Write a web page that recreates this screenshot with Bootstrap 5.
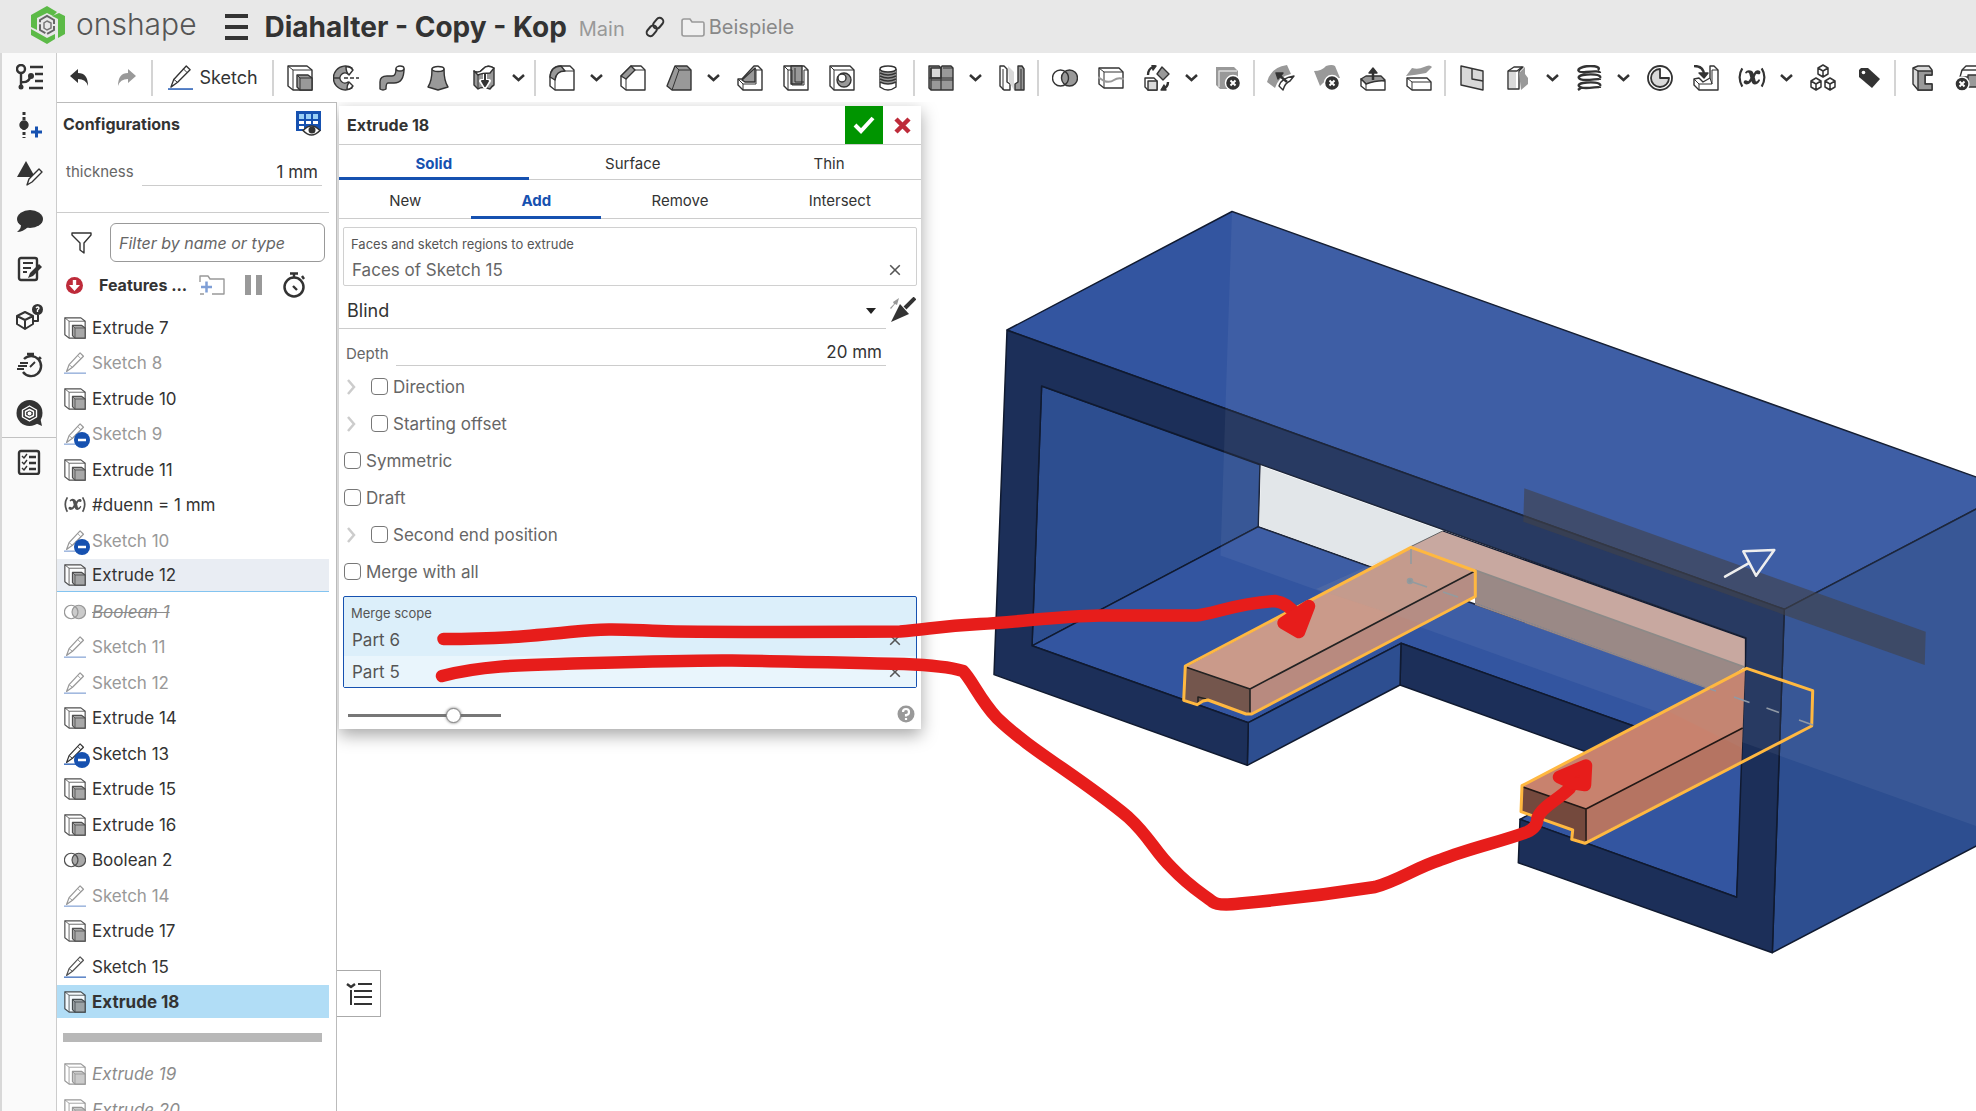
<!DOCTYPE html>
<html lang="en">
<head>
<meta charset="utf-8">
<meta name="viewport" content="width=device-width, initial-scale=1">
<title>Diahalter - Copy - Kop</title>
<link href="https://cdn.jsdelivr.net/npm/bootstrap@5.3.0/dist/css/bootstrap.min.css" rel="stylesheet">
<style>
:root{--ink:#333;--muted:#666;--rule:#ccc;--brand:#1651b0}
body{font-family:Inter,"Open Sans",sans-serif;font-size:17px;line-height:24px;color:var(--ink);background:#fff}
a{color:inherit;text-decoration:none}
button{color:inherit}
svg{display:block;flex:none}
.ico{fill:none;stroke:#333;stroke-width:1.4;stroke-linejoin:round}
svg .g{fill:#999}svg .lg{fill:#d9d9d9}svg .w{fill:#fff}svg .k{fill:#333}svg .n{stroke:none}svg .h{stroke-width:2.4}
.bare{border:0;background:none;padding:0;display:flex;align-items:center;justify-content:center}
.topbar{height:53px;background:#e8e8e8;padding-left:31px}
.mark-logo{margin-top:-4px}
.brandname{font-size:30px;font-weight:300;color:#555;margin:-6px 0 0 11px}
.doc-title{font-size:28px;font-weight:700;line-height:34px;margin:0 0 0 17px}
.crumb{font-size:20px;color:#888}
.crumb.branch{color:#999}
.rail{width:57px;background:#fafafa;border-left:2px solid #d8d8d8;border-right:1px solid var(--rule);padding-left:2px}
.rail .bare{height:48px;width:50px}
.rail hr{margin:0 0 0 -2px;border-color:#aaa;opacity:.7}
.tools{height:49px}
.tools .bare{width:46px;height:36px;flex:none}
.tools .more{width:25px;justify-content:flex-start;padding-left:5px}
.tools .sketch{width:114px;font-size:18px;gap:6px}
.vsep{width:2px;height:36px;background:#d4d4d4;margin:0 3px 0 2px;flex:none}
.side{width:280px;border-top:1px solid #bbb;border-right:1px solid #bbb;flex:none;overflow:hidden}
.side h2{font-size:16px;font-weight:700;line-height:24px;margin:0}
.conf{height:110px;width:272px;border-bottom:1px solid var(--rule)}
.conf-head{padding:8px 8px 0 6px}
.conf-row{margin-top:22px;padding:0 7px 0 9px}
.lbl{font-size:15px;color:#666;flex:none}
.lbl-conf{width:76px}
.lbl-depth{width:50px}
.lined{border:0;border-bottom:1px solid var(--rule);border-radius:0;text-align:right;background:none;width:0;height:28px;outline:0;color:#333}
.filter-row{width:284px;margin-top:10px;padding:0 16px 0 14px}
.filterbox{width:215px;height:39px;border:1px solid #999;border-radius:6px;padding:0 8px;font-size:16px;font-style:italic;color:#333}
.filterbox::placeholder{color:#666;opacity:1}
.feat-head{padding:10px 0 0 9px}
.feat-list{padding-top:13px}
.feat{height:33px;width:272px;padding-left:7px;gap:6px;margin-bottom:2px;white-space:nowrap}
.feat:nth-child(even){margin-bottom:3px}
.feat svg{opacity:.85;overflow:visible}
.off{color:#999}.off svg{opacity:.5}
.feat .pinned{opacity:1}
.hot{background:#e9edf3;border-bottom:1px solid #83c4f0}
.cur{background:#b1ddf6;font-weight:700}
.ghost{color:#8c8c8c;font-style:italic}.ghost svg{opacity:.5}
.struck{text-decoration:line-through}
.rollbar{width:259px;height:9px;background:#b8b8b8;margin:15px 0 15px 6px}
.stage,.marks{position:absolute;inset:0;width:100%;height:100%}
.marks{pointer-events:none;z-index:3}
.dlg{position:absolute;left:2px;top:4px;width:582px;background:#fff;box-shadow:0 6px 16px rgba(0,0,0,.35);z-index:2;color:#333}
.dlg-head{height:39px;border-bottom:1px solid var(--rule);padding-left:8px}
.dlg-head h1{font-size:16px;font-weight:700;line-height:24px;margin:0}
.ok{width:38px;height:38px;background:#009500}
.cancel{width:38px}
.tabrow{font-size:15px;border-bottom:1px solid var(--rule)}
.tabrow .bare{height:39px;border-bottom:3px solid transparent;margin-bottom:-1px;padding-top:6px}
.tabrow.first .bare{height:35px}
.tabrow .on{color:var(--brand);font-weight:700;border-color:var(--brand)}
.pick{border:1px solid #d0d0d0;border-radius:2px;margin:0 4px;color:#666}
.pick .cap{font-size:13px;line-height:20px;padding:6px 0 0 7px;color:#555}
.pick .item{padding:0 15px 0 8px;height:33px}
.pick .item:last-child{height:31px}
.pick.live{border-color:var(--brand);background:#dceffa;color:#555}
.live .alt{background:#e9f5fc}
.kind{appearance:none;border:0;border-bottom:1px solid var(--rule);border-radius:0;background:none;font-size:18px;width:547px;height:43px;padding:8px 8px 0;color:#333}
.caret{position:absolute;left:527px;top:22px;pointer-events:none}
.depth-row{width:547px;height:37px;padding-left:7px}
.opt{height:37px;gap:5px;padding-left:5px;color:#666;line-height:24px}
.opt.deep{padding-left:8px}
.opt.deep input{margin-left:10px}
.opt input{appearance:none;width:17px;height:17px;border:1px solid #777;border-radius:4px;background:#fff;margin:0;flex:none}
.opts{padding:2px 0 6px}
.dlg-foot{height:41px;padding:17px 6px 0 9px}
.fade-range{appearance:none;width:153px;height:20px;background:none;margin:0}
.fade-range::-webkit-slider-runnable-track{height:3px;background:#777}
.fade-range::-webkit-slider-thumb{appearance:none;width:15px;height:15px;border-radius:50%;background:#fff;border:1px solid #888;margin-top:-6px;box-shadow:0 0 3px #666}
.parts{position:absolute;left:0;top:868px;width:44px;height:47px;background:#fff;border:1px solid #aaa;border-left:0}
</style>
<script src="https://cdn.jsdelivr.net/npm/bootstrap@5.3.0/dist/js/bootstrap.bundle.min.js"></script>
</head>
<body class="vh-100 overflow-hidden d-flex flex-column">

<svg width="0" height="0" class="position-absolute" aria-hidden="true">
  <symbol id="ext" viewBox="0 0 26 26"><path class="w" d="M1 1h19l5 4v20H6l-5-4z"/><path d="M1 1l5 4v20M6 5h19" stroke-width="1"/><path class="g" d="M10 10h11l4 3v12H13l-3-3z"/><path d="M13 13h12M13 13v12M10 10l3 3" stroke-width="1"/></symbol>
  <symbol id="pen" viewBox="0 0 26 26"><path class="w" d="M6 15L19 1l4 4L10 18l-7 5z"/><path d="M6 15l4 3M16 4l4 4" stroke-width="1"/><path d="M0 25h26" stroke="#1651b0" stroke-width="1.5"/></symbol>
  <symbol id="boo" viewBox="0 0 26 26"><circle cx="8.500" cy="13" r="8" class="w"/><circle cx="17.500" cy="13" r="8" class="g"/><path d="M13 6.400a8 8 0 0 1 0 13.200"/></symbol>
  <symbol id="chev" viewBox="0 0 13 13"><path d="M1 4l5.500 5L12 4" fill="none" stroke="#333" stroke-width="2.500"/></symbol>
  <symbol id="minus" viewBox="0 0 16 16"><circle cx="8" cy="8" r="8" fill="#1651b0" stroke="none"/><path d="M4 8h8" stroke="#fff" stroke-width="2.500"/></symbol>
  <symbol id="cross" viewBox="0 0 10 10"><path d="M1 1l8 8M9 1l-8 8" fill="none" stroke="#555" stroke-width="1.300"/></symbol>
  <symbol id="right" viewBox="0 0 9 16"><path d="M1 1l6 7-6 7" fill="none" stroke="#ccc" stroke-width="2.500"/></symbol>
  <symbol id="xx" viewBox="0 0 26 26"><path class="k n" d="M8 9q2-3 5-2 2 0 3 3 2-4 5-3 2 1 1 3-1 1-3 0-1 0-2 3l1 4q1 1 3-2l1 1q-2 4-5 4-2 0-3-3-2 3-5 3-3-1-2-3 1-2 4 0 1-1 2-3l-1-4q-1-2-3 0z" transform="translate(-1.500 -1)"/><path d="M4 4q-5 8 0 17M22 4q5 8 0 17" stroke-width="2"/></symbol>
</svg>

<header class="topbar d-flex align-items-center flex-shrink-0">
  <svg class="mark-logo" width="34" height="38" viewBox="0 0 34 38"><g fill="#5cba47"><path d="M16 0l10 6-4 4-6-3L6 12v12L0 21V9z"/><path d="M28 7l6 3v18l-7 4V13l-6-3z"/><path d="M0 23l16 9 8-4v5l-8 5L0 29z"/></g><path d="M16 10l7 4v10l-7 4-7-4V14z" fill="none" stroke="#666" stroke-width="2" stroke-dasharray="12 2"/><path d="M16 15l4 2v5l-4 2-3-2v-5z" fill="none" stroke="#777" stroke-width="1.500"/></svg>
  <span class="brandname">onshape</span>
  <button class="bare ms-4 ps-1" aria-label="Menu"><svg width="23" height="26" viewBox="0 0 23 26"><path d="M0 2h23M0 13h23M0 24h23" stroke="#333" stroke-width="4"/></svg></button>
  <h1 class="doc-title text-nowrap">Diahalter - Copy - Kop</h1>
  <span class="crumb branch ms-2 ps-1 pt-1">Main</span>
  <button class="bare ms-3 ps-1" aria-label="Link"><svg width="20" height="22" viewBox="0 0 22 22" class="ico"><g transform="rotate(-50 11 11)" stroke-width="2.200"><rect x="-1" y="7" width="13" height="8" rx="4"/><rect x="10" y="7" width="13" height="8" rx="4"/></g></svg></button>
  <svg class="ms-3" width="24" height="20" viewBox="0 0 24 20"><path d="M1 17V4q0-2 2-2h6l2 3h11q1 0 1 2v10q0 2-2 2H3q-2 0-2-2z" fill="#f0f0f0" stroke="#999" stroke-width="1.600"/></svg>
  <a href="#" class="crumb ms-1">Beispiele</a>
</header>

<div class="d-flex flex-grow-1 overflow-hidden">
  <nav class="rail flex-shrink-0 d-flex flex-column">
    <button class="bare" aria-label="Features"><svg width="27" height="26" viewBox="0 0 27 26" class="ico"><circle cx="5" cy="5" r="4" class="h"/><path class="h" d="M5 9v13M5 18q8 1 9-5"/><circle cx="5" cy="23" r="2.500" class="k n"/><circle cx="15" cy="12" r="3" class="k n"/><path class="h" d="M14 3h13M19 10h8M19 17h8M13 24h14"/></svg></button>
    <button class="bare" aria-label="Insert"><svg width="27" height="26" viewBox="0 0 27 26" class="ico"><circle cx="8" cy="13" r="4" class="k"/><path d="M8 0v26" stroke-width="3" stroke-dasharray="3 2"/><path d="M15 20h11M20.500 14.500v11" stroke="#1651b0" stroke-width="3"/></svg></button>
    <button class="bare" aria-label="Appearance"><svg width="27" height="26" viewBox="0 0 27 26" class="ico"><path class="k n" d="M10 1l9 16H1z"/><path class="w" d="M13 19L23 9l3 3-10 10-5 3z"/></svg></button>
    <button class="bare" aria-label="Comments"><svg width="27" height="26" viewBox="0 0 27 26" class="ico"><ellipse class="k n" cx="14" cy="11" rx="13" ry="9"/><path class="k n" d="M5 15q1 5-4 9 6 0 11-5z"/></svg></button>
    <button class="bare" aria-label="Notes"><svg width="27" height="26" viewBox="0 0 27 26" class="ico"><rect class="h" x="3" y="2" width="18" height="22" rx="2"/><path d="M7 7h10M7 12h8M7 16h4" stroke-width="2"/><path class="k n" d="M12 22l2-5L23 8l3 3-9 9z"/></svg></button>
    <button class="bare" aria-label="Help part"><svg width="27" height="26" viewBox="0 0 27 26" class="ico"><path d="M1 12l8-4 8 4v8l-8 5-8-5zM1 12l8 4 8-4M9 16v9" stroke-width="2"/><circle cx="21.500" cy="5.500" r="5.500" class="k n"/><path d="M20 4q2-2 3 0 0 1-1.500 2v2" stroke="#fff"/><path d="M22 11v6h-4" stroke-width="2"/></svg></button>
    <button class="bare" aria-label="Timing"><svg width="27" height="26" viewBox="0 0 27 26" class="ico"><path class="h" d="M8 7a10 10 0 1 1-1 13M11 2h7M14.500 2v3M23 5l2 2"/><path d="M14 15l5-5M4 11h8M2 14h9M1 17h7" stroke-width="1.800"/></svg></button>
    <button class="bare" aria-label="Learning"><svg width="27" height="27" viewBox="0 0 27 27" class="ico"><circle cx="13.500" cy="13" r="13" class="k n"/><path class="k n" d="M17 22l9 4-2-9z"/><path d="M13.500 6l7 4v7l-7 4-7-4v-7zM13.500 9.500l4 2v4l-4 2-4-2v-4z" stroke="#fff"/><circle cx="13.500" cy="13.500" r="2" fill="#fff" stroke="none"/></svg></button>
    <hr>
    <button class="bare" aria-label="Checklist"><svg width="27" height="26" viewBox="0 0 27 26" class="ico"><rect class="h" x="3" y="2" width="20" height="23" rx="2"/><path d="M13 8h7M13 14h7M13 20h7" stroke-width="2.400"/><path d="M6 7l2 2 3-4M6 13l2 2 3-4M6 19l2 2 3-4"/></svg></button>
  </nav>

  <div class="d-flex flex-column flex-grow-1 overflow-hidden">
    <div class="tools d-flex align-items-center flex-shrink-0 overflow-hidden">
      <button class="bare" aria-label="Undo"><svg width="20" height="20" viewBox="0 0 20 20"><path d="M0 8l8-7v4q10 0 10 13-2-7-10-7v4z" fill="#333"/></svg></button>
      <button class="bare" aria-label="Redo"><svg width="20" height="20" viewBox="0 0 20 20"><path d="M20 8l-8-7v4Q2 5 2 18q2-7 10-7v4z" fill="#999"/></svg></button>
      <span class="vsep"></span>
      <button class="bare sketch"><svg class="ico" width="25" height="25"><use href="#pen"/></svg>Sketch</button>
      <span class="vsep"></span>
      <button class="bare" aria-label="Extrude"><svg class="ico" width="26" height="26"><use href="#ext"/></svg></button>
      <button class="bare" aria-label="Revolve"><svg class="ico" width="26" height="26" viewBox="0 0 26 26"><path class="g" d="M19 3A12 12 0 1 0 19 23L15 17A5 5 0 1 1 15 9z"/><path class="w" d="M13 2q4-1 7 3l-4 5q-3-3-3-8zM16 17l4 4q-3 4-6 3 0-4 2-7z"/><path d="M0 13h7" /><path d="M11 13h15" stroke-dasharray="4 2"/></svg></button>
      <button class="bare" aria-label="Sweep"><svg class="ico" width="26" height="26" viewBox="0 0 26 26"><path class="g" d="M1 24v-7q0-6 7-6h5q4 0 4-7h8q0 14-10 14H9q-2 0-2 6-3 2-6 0z"/><ellipse class="w" cx="21" cy="3.500" rx="4" ry="2.500"/></svg></button>
      <button class="bare" aria-label="Loft"><svg class="ico" width="26" height="26" viewBox="0 0 26 26"><path class="g" d="M7 4q0 12-4 18l10 3 10-3q-4-6-4-18z"/><ellipse class="w" cx="13" cy="4" rx="6" ry="2.500"/></svg></button>
      <button class="bare" aria-label="Thicken"><svg class="ico" width="26" height="26" viewBox="0 0 26 26"><path class="g" d="M3 6q5 3 9-2t11-1v17q-2 1-4 4-8-3-12 0l-4-4z"/><path class="w" d="M3 6q5 3 9-2t11-1l-4 5q-8 0-12 2z"/><path d="M7 10v14" stroke-width="1"/><path d="M14 9v11M10 16l4 6 4-6z" stroke="#fff" stroke-width="4"/><path class="k" d="M14 9v11M11 16l3 5 3-5z" stroke-width="2"/></svg></button>
      <button class="bare more" aria-label="More"><svg width="13" height="13"><use href="#chev"/></svg></button>
      <span class="vsep"></span>
      <button class="bare" aria-label="Fillet"><svg class="ico" width="26" height="26" viewBox="0 0 26 26"><path class="w" d="M1 21V12Q2 1 12 1h9l4 4v20H6z"/><path d="M6 25V15q1-9 9-9h10" stroke-width="1"/><path class="g" d="M1 12Q2 1 12 1l4 5q-9 0-10 9z"/></svg></button>
      <button class="bare more" aria-label="More"><svg width="13" height="13"><use href="#chev"/></svg></button>
      <button class="bare" aria-label="Chamfer"><svg class="ico" width="26" height="26" viewBox="0 0 26 26"><path class="w" d="M1 21V11L11 1h10l4 4v20H6z"/><path d="M6 25V14l9-9h10" stroke-width="1"/><path class="g" d="M1 11L11 1l4 4-9 9z"/></svg></button>
      <button class="bare" aria-label="Draft"><svg class="ico" width="26" height="26" viewBox="0 0 26 26"><path class="g" d="M1 21L9 1h12l4 4v20H6z"/><path d="M6 25l7-20h12M9 1l4 4" stroke-width="1"/></svg></button>
      <button class="bare more" aria-label="More"><svg width="13" height="13"><use href="#chev"/></svg></button>
      <button class="bare" aria-label="Rib"><svg class="ico" width="26" height="26" viewBox="0 0 26 26"><path class="w" d="M1 14h4L17 1h4l4 4v20H6l-5-5z"/><path class="g" d="M5 15L18 3v14H8z"/><path d="M1 14l5 5v6M6 19h13V5M18 3l1 2h6" stroke-width="1"/></svg></button>
      <button class="bare" aria-label="Shell"><svg class="ico" width="26" height="26" viewBox="0 0 26 26"><path class="w" d="M1 1h20l4 4v20H5l-4-4z"/><path class="g" d="M8 1h11v18H8z"/><path d="M1 1l4 4v20M5 5h4v15h12V5h4M12 3v14h9" stroke-width="1"/></svg></button>
      <button class="bare" aria-label="Hole"><svg class="ico" width="26" height="26" viewBox="0 0 26 26"><path class="w" d="M1 1h20l4 4v20H5l-4-4z"/><path d="M1 1l4 4v20M5 5h20" stroke-width="1"/><circle class="g" cx="15" cy="15" r="7"/><circle class="w" cx="13" cy="13" r="4"/></svg></button>
      <button class="bare" aria-label="Thread"><svg class="ico" width="26" height="26" viewBox="0 0 26 26"><path class="w" d="M5 4v18q8 6 16 0V4"/><path class="g n" d="M5 5v12q8 4 16 0V5z"/><ellipse class="w" cx="13" cy="4" rx="8" ry="3"/><path d="M5 8q8 4 16 0M5 11q8 4 16 0M5 14q8 4 16 0M5 17q8 4 16 0"/></svg></button>
      <span class="vsep"></span>
      <button class="bare" aria-label="Pattern"><svg class="ico" width="26" height="26" viewBox="0 0 26 26"><path class="g" d="M1 1h10l2 2 1-2h9l2 2v22H3l-2-2z"/><path class="lg" d="M3 3h10v10H3z"/><path d="M1 13h24M13 3v22M3 3v22M15 3h10M3 15h22" stroke-width="1.200"/></svg></button>
      <button class="bare more" aria-label="More"><svg width="13" height="13"><use href="#chev"/></svg></button>
      <button class="bare" aria-label="Mirror"><svg class="ico" width="26" height="26" viewBox="0 0 26 26"><path class="w" d="M1 1h4l3 3v13l3 2v6H5l-4-4z"/><path class="lg n" d="M9 1l6 6v18l-5-8z"/><path class="g" d="M25 25h-9v-6l3-2V1h4l2 3z"/><path d="M4 4v21M22 4v21" stroke-width="1"/></svg></button>
      <span class="vsep"></span>
      <button class="bare" aria-label="Boolean"><svg class="ico" width="26" height="26"><use href="#boo"/></svg></button>
      <button class="bare" aria-label="Split"><svg class="ico" width="26" height="26" viewBox="0 0 26 26"><path class="w" d="M1 3h20l4 4v16H6l-5-4z"/><path d="M1 3l5 4v16M6 7h19" stroke-width="1"/><path d="M0 12l6 4q6 2 10-1t10-1" stroke="#999" stroke-width="2"/></svg></button>
      <button class="bare" aria-label="Transform"><svg class="ico" width="26" height="26" viewBox="0 0 26 26"><path class="w" d="M1 13h9l3 3v9H4l-3-3z"/><path class="lg" d="M4 16h9v9H4z"/><path class="g" d="M18 2l7 7-6 6-6-6z"/><path class="h" d="M4 10q0-6 5-8M24 17q0 5-5 7"/><path class="k" d="M8 0l4 1-3 4zM20 20l-3 5 5 0z"/></svg></button>
      <button class="bare more" aria-label="More"><svg width="13" height="13"><use href="#chev"/></svg></button>
      <button class="bare" aria-label="Delete part"><svg class="ico" width="26" height="26" viewBox="0 0 26 26"><path class="g n" d="M1 2h18l4 4v18H5l-4-4z"/><path d="M4 22V6h18" stroke="#ddd"/><circle class="k" stroke="#fff" cx="18" cy="18" r="7.500"/><path d="M15.500 15.500l5 5m0-5l-5 5" stroke="#fff" stroke-width="2"/></svg></button>
      <span class="vsep"></span>
      <button class="bare" aria-label="Modify fillet"><svg class="ico" width="28" height="26" viewBox="0 0 28 26"><path class="g n" d="M0 17Q4 2 20 0l4 9q-12 2-16 14z"/><path class="w" d="M12 21q2-8 15-10l-4 5q-5 2-7 9z"/><path d="M20 17L12 10" class="h"/><path class="k" d="M9 8l7 0-5 6z"/></svg></button>
      <button class="bare" aria-label="Delete face"><svg class="ico" width="26" height="26" viewBox="0 0 26 26"><path class="g n" d="M0 6Q8 6 12 1q6-2 9 0l5 12Q14 12 6 21z"/><circle class="k" stroke="#fff" cx="18" cy="18" r="7.500"/><path d="M15.500 15.500l5 5m0-5l-5 5" stroke="#fff" stroke-width="2"/></svg></button>
      <button class="bare" aria-label="Move face"><svg class="ico" width="26" height="26" viewBox="0 0 26 26"><path class="g" d="M1 14l5-3h15l4 4-8 3-11 1z"/><path class="w" d="M1 14l5 5q12-4 19-3v9H6l-5-4z"/><path d="M6 19v6" stroke-width="1"/><path d="M13 15V5" stroke-width="2.500"/><path class="k" d="M9 8l4-5 4 5z"/></svg></button>
      <button class="bare" aria-label="Replace face"><svg class="ico" width="26" height="26" viewBox="0 0 26 26"><path class="g n" d="M6 3q6 2 12-1t8 0l-6 6q-10 2-20 3z"/><path class="w" d="M1 13h20l4 4v8H6l-5-4z"/><path d="M1 13l5 4v8M6 17h19" stroke-width="1"/></svg></button>
      <span class="vsep"></span>
      <button class="bare" aria-label="Plane"><svg class="ico" width="26" height="26" viewBox="0 0 26 26"><path class="lg" d="M2 1l22 5v19L2 20z"/><path d="M13 4v10l11 2"/></svg></button>
      <button class="bare" aria-label="Frame"><svg class="ico" width="26" height="26" viewBox="0 0 26 26"><path class="w" d="M3 6l6-4h9l-4 4v18H3z"/><path class="lg n" d="M4 7h7v16H4z"/><path class="g n" d="M14 8l6-6v7l3 4v6l-7 6z"/><path d="M3 6h9l5-4"/></svg></button>
      <button class="bare more" aria-label="More"><svg width="13" height="13"><use href="#chev"/></svg></button>
      <button class="bare" aria-label="Helix"><svg class="ico" width="26" height="26" viewBox="0 0 26 26"><path class="h" d="M22 5C26 1 14 0 7 2S1 8 10 7s14-1 14 1M24 13c2-4-10-4-17-3s-5 5 3 5 14-2 14 0M24 21c2-4-10-4-17-3s-5 5 3 5 14-2 14 0M2 25l4-3"/></svg></button>
      <button class="bare more" aria-label="More"><svg width="13" height="13"><use href="#chev"/></svg></button>
      <button class="bare" aria-label="Curve"><svg class="ico" width="26" height="26" viewBox="0 0 26 26"><circle class="w" cx="13" cy="13" r="12" stroke-width="1.800"/><path class="lg" d="M13 4a9 9 0 1 0 9 9h-9z" stroke-width="1.800"/></svg></button>
      <button class="bare" aria-label="Derived"><svg class="ico" width="26" height="26" viewBox="0 0 26 26"><path class="w" d="M1 14l5-1 4 4 7-4V1h4l4 4v20H6l-5-5z"/><path d="M1 14l5 5v6M6 19h13V5h6M17 13l2 6" stroke-width="1"/><path class="h" d="M1 1q10 0 10 9"/><path class="k" d="M6 8h9l-4 5z"/></svg></button>
      <button class="bare" aria-label="Variable"><svg class="ico" width="28" height="28" viewBox="0 0 26 26"><use href="#xx"/></svg></button>
      <button class="bare more" aria-label="More"><svg width="13" height="13"><use href="#chev"/></svg></button>
      <button class="bare" aria-label="Composite"><svg class="ico" width="28" height="28" viewBox="0 0 28 28"><g stroke-width="1.500"><path class="w" d="M14 1l5 3v6l-5 3-5-3V4zM9 4l5 3 5-3M14 7v6"/><path class="w" d="M7 14l5 3v6l-5 3-5-3v-6zM2 17l5 3 5-3M7 20v6"/><path class="w" d="M21 14l5 3v6l-5 3-5-3v-6zM16 17l5 3 5-3M21 20v6"/></g></svg></button>
      <button class="bare" aria-label="Tag"><svg class="ico" width="24" height="24" viewBox="0 0 24 24"><path class="k n" d="M4 2h7l12 11-8 9L2 11V4z"/><circle cx="6.500" cy="6.500" r="1.800" fill="#fff" stroke="none"/></svg></button>
      <span class="vsep"></span>
      <button class="bare" aria-label="Beam"><svg class="ico" width="26" height="26" viewBox="0 0 26 26"><path class="lg" d="M4 3l5-2h11l3 4v5h-7v9h7v6H9l-5-6z"/><path class="g" d="M9 6h14v4h-7v9h7v6H9z"/><path d="M4 3l5 3"/></svg></button>
      <button class="bare" aria-label="Trim"><svg class="ico" width="28" height="26" viewBox="0 0 28 26"><path class="w" d="M8 5l4-4h16v11H6z"/><path class="g" d="M14 10h14v12H14z"/><path d="M8 5h20"/><circle class="k" stroke="#fff" cx="8" cy="19" r="7"/><path d="M5.500 16.500l5 5m0-5l-5 5" stroke="#fff" stroke-width="2"/></svg></button>
    </div>

    <div class="d-flex flex-grow-1 overflow-hidden">
      <aside class="side">
        <section class="conf">
          <div class="conf-head d-flex justify-content-between align-items-center">
            <h2>Configurations</h2>
            <button class="bare" aria-label="Show table"><svg width="25" height="25" viewBox="0 0 25 25"><path d="M0 0h25v20H0z" fill="#1651b0"/><path d="M3 3h5v5H3zM10 3h5v5h-5zM17 3h5v5h-5z" fill="#9bd0f5"/><path d="M3 10h5v3H3zM10 10h5v3h-5zM17 10h5v3h-5zM3 15h5v3H3z" fill="#fff"/><path d="M7 19.500q8.500-9 17 0-8.500 9-17 0z" fill="#fff" stroke="#333" stroke-width="1.500"/><circle cx="16" cy="19" r="3.500" fill="#333"/></svg></button>
          </div>
          <div class="conf-row d-flex align-items-center">
            <label for="thk" class="lbl lbl-conf">thickness</label>
            <input id="thk" class="lined flex-grow-1 pe-1" value="1 mm">
          </div>
        </section>
        <div class="filter-row d-flex align-items-center justify-content-between">
          <svg width="21" height="22" viewBox="0 0 21 22" class="ico"><path d="M1 1h19v2l-7 8v10l-4-3v-7L1 3z"/></svg>
          <input class="filterbox" aria-label="Filter" placeholder="Filter by name or type">
        </div>
        <div class="feat-head d-flex align-items-center">
          <svg width="17" height="17" viewBox="0 0 17 17"><circle cx="8.500" cy="8.500" r="8.500" fill="#be2b3a"/><path d="M6.800 3h3.400v5H14l-5.500 6L3 8h3.800z" fill="#fff"/></svg>
          <h2 class="ms-3 text-nowrap">Features ...</h2>
          <button class="bare ms-2 ps-1" aria-label="Add folder"><svg width="26" height="22" viewBox="0 0 26 22" class="ico"><path d="M1 8V2h8l2 3h14v15H13M1 20h4" stroke="#999"/><path d="M2 13h11M7.500 7.500v11" stroke="#7f9fd6" stroke-width="2.500"/></svg></button>
          <button class="bare ms-3 ps-1" aria-label="Pause"><svg width="17" height="20"><path d="M0 0h6v20H0zM11 0h6v20h-6z" fill="#999"/></svg></button>
          <button class="bare ms-3 ps-1" aria-label="Regeneration times"><svg width="24" height="26" viewBox="0 0 24 26" class="ico"><circle cx="12" cy="15" r="9.500" stroke-width="2.500"/><path class="h" d="M8 1.500h8M12 2v3M20 4l2 3M11 14l4 4"/></svg></button>
        </div>
        <ul class="feat-list list-unstyled m-0">
          <li class="feat d-flex align-items-center"><svg class="ico" width="22" height="22"><use href="#ext"/></svg>Extrude 7</li>
          <li class="feat d-flex align-items-center off"><svg class="ico" width="22" height="22"><use href="#pen"/></svg>Sketch 8</li>
          <li class="feat d-flex align-items-center"><svg class="ico" width="22" height="22"><use href="#ext"/></svg>Extrude 10</li>
          <li class="feat d-flex align-items-center off"><svg class="ico pinned" width="22" height="22"><use href="#pen" opacity=".5"/><use href="#minus" x="10" y="9" width="16" height="16"/></svg>Sketch 9</li>
          <li class="feat d-flex align-items-center"><svg class="ico" width="22" height="22"><use href="#ext"/></svg>Extrude 11</li>
          <li class="feat d-flex align-items-center"><svg class="ico" width="22" height="22"><use href="#xx"/></svg>#duenn = 1 mm</li>
          <li class="feat d-flex align-items-center off"><svg class="ico pinned" width="22" height="22"><use href="#pen" opacity=".5"/><use href="#minus" x="10" y="9" width="16" height="16"/></svg>Sketch 10</li>
          <li class="feat d-flex align-items-center hot"><svg class="ico" width="22" height="22"><use href="#ext"/></svg>Extrude 12</li>
          <li class="feat d-flex align-items-center ghost"><svg class="ico" width="22" height="22"><use href="#boo"/></svg><span class="struck">Boolean 1</span></li>
          <li class="feat d-flex align-items-center off"><svg class="ico" width="22" height="22"><use href="#pen"/></svg>Sketch 11</li>
          <li class="feat d-flex align-items-center off"><svg class="ico" width="22" height="22"><use href="#pen"/></svg>Sketch 12</li>
          <li class="feat d-flex align-items-center"><svg class="ico" width="22" height="22"><use href="#ext"/></svg>Extrude 14</li>
          <li class="feat d-flex align-items-center"><svg class="ico pinned" width="22" height="22"><use href="#pen"/><use href="#minus" x="10" y="9" width="16" height="16"/></svg>Sketch 13</li>
          <li class="feat d-flex align-items-center"><svg class="ico" width="22" height="22"><use href="#ext"/></svg>Extrude 15</li>
          <li class="feat d-flex align-items-center"><svg class="ico" width="22" height="22"><use href="#ext"/></svg>Extrude 16</li>
          <li class="feat d-flex align-items-center"><svg class="ico" width="22" height="22"><use href="#boo"/></svg>Boolean 2</li>
          <li class="feat d-flex align-items-center off"><svg class="ico" width="22" height="22"><use href="#pen"/></svg>Sketch 14</li>
          <li class="feat d-flex align-items-center"><svg class="ico" width="22" height="22"><use href="#ext"/></svg>Extrude 17</li>
          <li class="feat d-flex align-items-center"><svg class="ico" width="22" height="22"><use href="#pen"/></svg>Sketch 15</li>
          <li class="feat d-flex align-items-center cur mb-0"><svg class="ico" width="22" height="22"><use href="#ext"/></svg>Extrude 18</li>
          <li class="rollbar"></li>
          <li class="feat d-flex align-items-center ghost"><svg class="ico" width="22" height="22"><use href="#ext"/></svg>Extrude 19</li>
          <li class="feat d-flex align-items-center ghost"><svg class="ico" width="22" height="22"><use href="#ext"/></svg>Extrude 20</li>
        </ul>
      </aside>

      <main class="position-relative flex-grow-1 overflow-hidden">
        <!-- 3D model -->
        <svg class="stage" viewBox="337 102 1639 1009" preserveAspectRatio="xMinYMin slice" role="img" aria-label="Part studio model">
          <g stroke="#101a30" stroke-width="1.500" stroke-linejoin="round">
            <path fill="#3355a0" d="M1007 330L1232 211.500 1980 478.500V507L1784.300 609.300z"/>
            <path fill="#2d4e90" d="M1784.300 609.300L1980 507V844L1772.300 952.700z"/>
            <path fill="#2d4e90" d="M1041.600 386L1260 464.700 1258.300 526.700 1032 645.800z"/>
            <path fill="#3355a0" d="M1258.300 526.700L1746 701 1736.700 897.300 1520 819.300 1673 740 1401 643.300 1248.300 722.700 1032 645.800z"/>
            <path fill="#1c2f59" d="M1401 643.300L1673 740V783L1400 685z"/>
            <path fill="#2d4e90" d="M1248.300 722.700L1401 643.300 1400 685 1247.300 765.300z"/>
            <path fill="#1c2f59" d="M1007 330.300L1784.300 609.300 1772.300 952.700 1518.300 862.700 1520 819.300 1736.700 897.300 1746 638 1041.600 386 1032 645.800 1248.300 722.700 1247.300 765.300 994 674.600z"/>
          </g>
          <path fill="#fff" fill-opacity=".055" d="M1232 211.500L1980 478.500V827.500L1220.500 555.500z"/>
          <path fill="#e2e6e9" d="M1261 466L1443 531 1411 547 1371 566 1259.500 526z"/>
          <path fill="#c8a8a0" d="M1411 546.500L1443.300 530.700 1745.500 638.500 1744.700 667 1475 570z"/>
          <path fill="#9a8986" d="M1475 570L1744.700 667 1711 690 1475 605z"/>
          <path d="M1475 570L1744.700 667" stroke="#8c8a88" stroke-width="1.500"/>
          <path d="M1475 603L1712 689.500" stroke="#7f8490" stroke-dasharray="2 1"/>
          <path d="M1411 546.500L1443.300 530.700" stroke="#666"/>
          <path d="M1443 531L1745.500 638.500V667" stroke="#111a30" fill="none" stroke-width="1.300"/>
          <!-- left bar -->
          <g stroke-linejoin="round">
            <path fill="#ca9a8a" d="M1411 547L1475 571 1250 689 1186 667z"/>
            <path fill="#b88a7f" d="M1250 689L1475 571V596L1250 714z"/>
            <path fill="#74564d" d="M1186 667L1250 689V714L1208 700 1197 704.500 1184 700z"/>
            <path fill="#a0a0a0" fill-opacity=".14" d="M1316 589L1411 547 1475 571V596L1425 625z"/>
            <path fill="none" stroke="#222" stroke-width="1.600" d="M1187 667.500L1250 689 1475 571M1250 689V713M1198 704V697L1206 699"/>
            <path fill="none" stroke="#ffb840" stroke-width="3" d="M1411 547.300L1475.300 571V596.500L1251.700 714H1246L1208 700 1203 701 1197 704.700 1183.700 700.300 1185.300 666z"/>
          </g>
          <g stroke="#939b9f" stroke-width="1.600" fill="none"><path d="M1411 549v15M1411 581.500l16 5.500M1443 592l15 5"/><circle cx="1410" cy="581" r="2.500" fill="#8f9698"/></g>
          <!-- right bar -->
          <g stroke-linejoin="round">
            <path fill="#c8826e" d="M1745 668L1742.700 728 1586 809 1522 786z"/>
            <path fill="#b57462" d="M1586 809L1742.700 728 1741.500 761 1585 842z"/>
            <path fill="#74493d" d="M1522 786L1586 809 1585 842 1572 838V830L1521 811.500z"/>
            <path fill="#b0a090" fill-opacity=".12" d="M1668 711L1745 668 1742 748z"/>
            <path fill="none" stroke="#221815" stroke-width="1.600" d="M1523 787L1586 809 1742.700 728M1586 809V841"/>
            <path fill="none" stroke="#ffb840" stroke-width="3" d="M1746.700 668.300L1812.700 690.700 1811.700 726 1585 843.300 1571.700 839.300 1572.700 830 1521 811.700 1522 785.700z"/>
          </g>
          <path d="M1710 689l6 2M1734 697l15.500 5.500M1766.500 708l12.500 4.500M1799 720l14 5" stroke="#9099a5" stroke-width="1.600"/>
          <path fill="#41424a" fill-opacity=".62" d="M1524.300 488.300L1925.700 631.700 1924.700 665 1523.300 521.700z"/>
          <path fill="none" stroke="#eee" stroke-width="2.500" stroke-linejoin="round" stroke-linecap="round" d="M1725 576.700L1748.500 563.300M1743.300 551.300L1774.300 550 1756 575.700z"/>
        </svg>

        <section class="dlg" aria-label="Extrude 18">
          <div class="dlg-head d-flex">
            <h1 class="my-auto me-auto">Extrude 18</h1>
            <button class="bare ok" aria-label="Accept"><svg width="22" height="18" viewBox="0 0 22 18"><path d="M2 9l6 6L20 2" fill="none" stroke="#fff" stroke-width="4"/></svg></button>
            <button class="bare cancel" aria-label="Cancel"><svg width="17" height="17" viewBox="0 0 17 17"><path d="M2 2l13 13M15 2L2 15" stroke="#be2b3a" stroke-width="4.500"/></svg></button>
          </div>
          <div class="tabrow first d-flex">
            <button class="bare flex-fill on">Solid</button><button class="bare flex-fill">Surface</button><button class="bare flex-fill">Thin</button>
          </div>
          <div class="tabrow d-flex">
            <button class="bare flex-fill">New</button><button class="bare flex-fill on">Add</button><button class="bare flex-fill">Remove</button><button class="bare flex-fill">Intersect</button>
          </div>
          <div class="pick mt-2">
            <div class="cap">Faces and sketch regions to extrude</div>
            <div class="item d-flex align-items-center justify-content-between"><span>Faces of Sketch 15</span><button class="bare" aria-label="Remove"><svg width="12" height="12"><use href="#cross"/></svg></button></div>
          </div>
          <div class="d-flex align-items-center position-relative">
            <select class="kind" aria-label="End type"><option>Blind</option></select>
            <svg class="caret" width="10" height="6"><path d="M0 0h10L5 6z" fill="#222"/></svg>
            <button class="bare ms-1 mt-1" aria-label="Flip direction"><svg width="26" height="26" viewBox="0 0 26 26"><path d="M25 1L15 11" stroke="#333" stroke-width="4"/><path d="M10 7l9 10L1 25z" fill="#333"/><path d="M0 11l4-4-1-2 6-4-2 7-2-1-4 5z" fill="#999"/></svg></button>
          </div>
          <div class="depth-row d-flex align-items-end">
            <label for="dep" class="lbl lbl-depth">Depth</label>
            <input id="dep" class="lined flex-grow-1 pe-1" value="20 mm">
          </div>
          <div class="opts">
            <label class="opt deep d-flex align-items-center"><svg width="9" height="16"><use href="#right"/></svg><input type="checkbox">Direction</label>
            <label class="opt deep d-flex align-items-center"><svg width="9" height="16"><use href="#right"/></svg><input type="checkbox">Starting offset</label>
            <label class="opt d-flex align-items-center"><input type="checkbox">Symmetric</label>
            <label class="opt d-flex align-items-center"><input type="checkbox">Draft</label>
            <label class="opt deep d-flex align-items-center"><svg width="9" height="16"><use href="#right"/></svg><input type="checkbox">Second end position</label>
            <label class="opt d-flex align-items-center"><input type="checkbox">Merge with all</label>
          </div>
          <div class="pick live">
            <div class="cap">Merge scope</div>
            <div class="item d-flex align-items-center justify-content-between"><span>Part 6</span><button class="bare" aria-label="Remove"><svg width="12" height="12"><use href="#cross"/></svg></button></div>
            <div class="item alt d-flex align-items-center justify-content-between"><span>Part 5</span><button class="bare" aria-label="Remove"><svg width="12" height="12"><use href="#cross"/></svg></button></div>
          </div>
          <div class="dlg-foot d-flex align-items-start justify-content-between">
            <input type="range" class="fade-range" min="0" max="100" value="71" aria-label="Preview fade">
            <svg width="18" height="18" viewBox="0 0 18 18"><circle cx="9" cy="9" r="8.500" fill="#999"/><path d="M6 7q0-3 3-3t3 3-3 3v1.500M9 13v2" fill="none" stroke="#fff" stroke-width="2.200"/></svg>
          </div>
        </section>

        <button class="bare parts" aria-label="Parts list"><svg width="26" height="24" viewBox="0 0 26 24" class="ico"><path d="M1 2l4 3 4-3" class="h"/><path d="M12 2h14M8 9h18M8 15h18M8 22h18M5 8v15" stroke-width="2"/></svg></button>

        <!-- hand-drawn annotation -->
        <svg class="marks" viewBox="337 102 1639 1009" preserveAspectRatio="xMinYMin slice" aria-hidden="true">
          <g fill="none" stroke="#e71d1b" stroke-width="12.500" stroke-linecap="round" stroke-linejoin="round">
            <path d="M443.500 639C500 639 530 636 570 632S620 629.500 660 631 800 632 900 631.500C930 629 940 626 980 624S1060 616 1100 615.500H1196C1215 614 1235 603 1275 601Q1288 603 1296 615"/>
            <path fill="#e71d1b" d="M1283.500 623L1299 632 1309 606 1294 616z"/>
            <path d="M442 676C480 666 520 665 560 664S680 660 732 660.500 850 663 904 664C930 665 950 667 963 671 972 680 980 700 997 718 1030 750 1080 777 1128 817 1150 837 1155 852 1172 868 1190 887 1200 892 1213 902Q1218 906 1240 903.500C1290 899 1330 894 1375 887 1400 880 1415 868 1440 860 1470 848 1500 842 1527 832Q1537 828 1537.500 818C1541 807 1558 800 1570 788"/>
            <path fill="#e71d1b" d="M1559 777L1586 765.500 1585 785 1572 783z"/>
          </g>
        </svg>
      </main>
    </div>
  </div>
</div>
</body>
</html>
